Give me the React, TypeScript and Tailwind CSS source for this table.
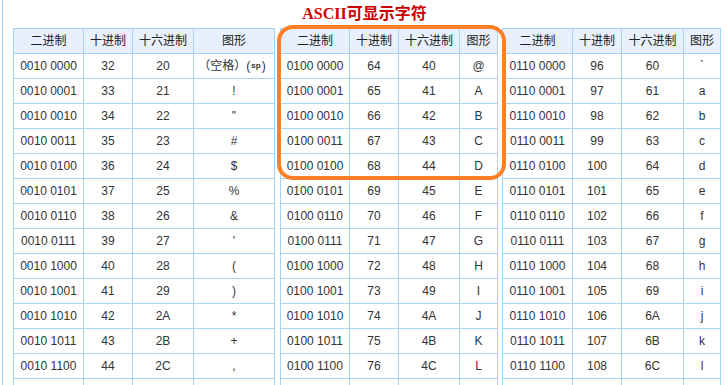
import React from "react";

type Row = { bin: string; dec: number; hex: string; ch: React.ReactNode };

const toBin = (n: number) => {
  const s = n.toString(2).padStart(8, "0");
  return `${s.slice(0, 4)} ${s.slice(4)}`;
};

const makeRows = (start: number, count: number): Row[] =>
  Array.from({ length: count }, (_, i) => {
    const n = start + i;
    return {
      bin: toBin(n),
      dec: n,
      hex: n.toString(16).toUpperCase(),
      ch:
        n === 32 ? (
          <span className="flex items-center">
            <span className="ml-[-4px]">（空格）</span>
            <span>(</span>
            <span className="px-[1px] text-[8px] font-bold">sp</span>
            <span>)</span>
          </span>
        ) : (
          String.fromCharCode(n)
        ),
    };
  });

const headers = ["二进制", "十进制", "十六进制", "图形"];

function AsciiTable({ start, cols, className }: { start: number; cols: string; className?: string }) {
  const rows = makeRows(start, 13);
  return (
    <div className={`grid border-l border-t border-[#a6d4f7] ${cols} ${className ?? ""}`}>
      {headers.map((h) => (
        <div
          key={h}
          className="h-[25px] flex items-center justify-center bg-[#e7f0fc] border-r border-b border-[#a6d4f7] text-[#222]"
        >
          {h}
        </div>
      ))}
      {rows.map((r) => (
        <React.Fragment key={r.dec}>
          <div className="h-[25px] flex items-center justify-center border-r border-b border-[#a6d4f7]">{r.bin}</div>
          <div className="h-[25px] flex items-center justify-center border-r border-b border-[#a6d4f7]">{r.dec}</div>
          <div className="h-[25px] flex items-center justify-center border-r border-b border-[#a6d4f7]">{r.hex}</div>
          <div className="h-[25px] flex items-center justify-center border-r border-b border-[#a6d4f7] whitespace-nowrap">
            {r.ch}
          </div>
        </React.Fragment>
      ))}
      {/* next row, below the fold */}
      <div className="h-[25px] border-r border-[#a6d4f7]" />
      <div className="h-[25px] border-r border-[#a6d4f7]" />
      <div className="h-[25px] border-r border-[#a6d4f7]" />
      <div className="h-[25px] border-r border-[#a6d4f7]" />
    </div>
  );
}

export default function App() {
  return (
    <div
      className="relative h-[385px] w-[726px] overflow-hidden bg-white text-[12px] text-[#333]"
      style={{ fontFamily: '"Liberation Sans", "Noto Sans CJK SC", sans-serif' }}
    >
      <div className="ml-[2px] h-full border-l border-[#a6d4f7]">
        <div className="h-[28px] flex items-center justify-center">
          <h1
            className="text-[16px] font-bold text-[#cc0000] leading-none"
            style={{ fontFamily: '"Liberation Serif", "Noto Sans CJK SC", serif' }}
          >
            ASCII可显示字符
          </h1>
        </div>
        <div className="flex items-start pl-[10px]">
          <AsciiTable start={32} cols="grid-cols-[70px_49px_61px_81px]" />
          <AsciiTable start={64} cols="grid-cols-[69px_49px_61px_38px]" className="ml-[5px]" />
          <AsciiTable start={96} cols="grid-cols-[70px_49px_62px_37px]" className="ml-[4px]" />
        </div>
      </div>
      <div className="pointer-events-none absolute left-[277px] top-[25px] h-[155px] w-[229px] rounded-[16px] border-4 border-[#ff7f27]" />
    </div>
  );
}
